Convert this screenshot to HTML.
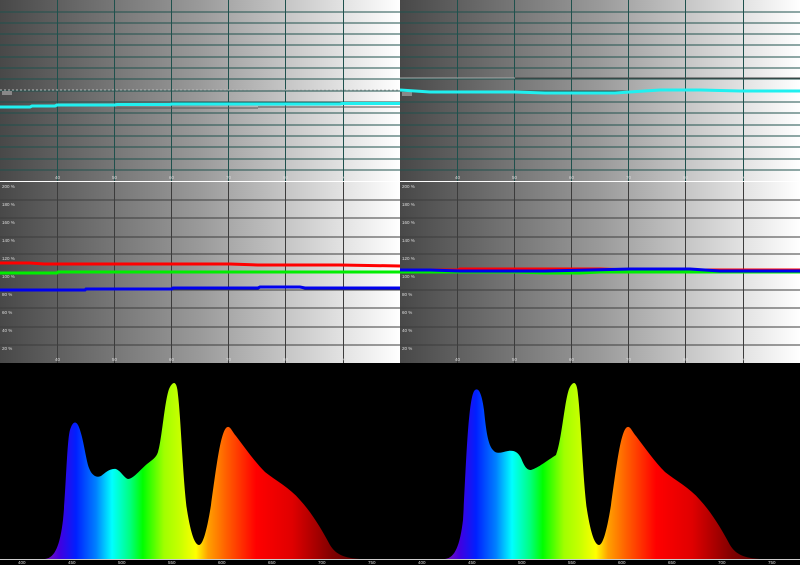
<!DOCTYPE html>
<html><head><meta charset="utf-8"><style>
html,body{margin:0;padding:0;background:#000;width:800px;height:565px;overflow:hidden}
svg{display:block}
text{font-family:"Liberation Sans",sans-serif;font-size:4.5px;fill:#ddd}
</style></head><body>
<svg width="800" height="565" viewBox="0 0 800 565" xmlns="http://www.w3.org/2000/svg">
<defs>
<linearGradient id="g" x1="0" x2="1" y1="0" y2="0">
<stop offset="0" stop-color="#484848"/><stop offset="0.5" stop-color="#9a9a9a"/><stop offset="1" stop-color="#ffffff"/>
</linearGradient>
<linearGradient id="sp" gradientUnits="userSpaceOnUse" x1="0" x2="400" y1="0" y2="0">
<stop offset="0.12" stop-color="#7010c0"/>
<stop offset="0.15" stop-color="#4000e0"/>
<stop offset="0.19" stop-color="#0020ff"/>
<stop offset="0.24" stop-color="#0080ff"/>
<stop offset="0.28" stop-color="#00ffff"/>
<stop offset="0.325" stop-color="#00ff80"/>
<stop offset="0.357" stop-color="#00ff00"/>
<stop offset="0.41" stop-color="#a0ff00"/>
<stop offset="0.45" stop-color="#c8ff00"/>
<stop offset="0.49" stop-color="#ffff00"/>
<stop offset="0.52" stop-color="#ffa000"/>
<stop offset="0.565" stop-color="#ff6000"/>
<stop offset="0.64" stop-color="#ff0000"/>
<stop offset="0.73" stop-color="#e00000"/>
<stop offset="0.83" stop-color="#800000"/>
<stop offset="0.89" stop-color="#600000"/>
</linearGradient>
<g id="topgrid" stroke="#1f514d" stroke-width="1">
<rect x="0" y="0" width="400" height="181" fill="url(#g)" stroke="none"/>
<path d="M0 12H400M0 23H400M0 34H400M0 45H400M0 57H400M0 68H400M0 79H400M0 91H400M0 102H400M0 113H400M0 125H400M0 136H400M0 147H400M0 159H400M0 170H400M57.5 0V181M114.5 0V181M171.5 0V181M228.5 0V181M285.5 0V181M343.5 0V181"/>
<text x="55" y="179" stroke="none">40</text><text x="112" y="179" stroke="none">50</text><text x="169" y="179" stroke="none">60</text><text x="226" y="179" stroke="none">70</text><text x="283" y="179" stroke="none">80</text><text x="341" y="179" stroke="none">90</text>
</g>
<g id="midgrid" stroke="#3c3c3c" stroke-width="1">
<rect x="0" y="0" width="400" height="181" fill="url(#g)" stroke="none"/>
<path d="M0 18H400M0 36H400M0 55H400M0 72H400M0 90H400M0 108H400M0 126H400M0 145H400M0 163H400M57.5 0V181M114.5 0V181M171.5 0V181M228.5 0V181M285.5 0V181M343.5 0V181"/>
<g stroke="none"><text x="2" y="6">200 %</text><text x="2" y="24">180 %</text><text x="2" y="42">160 %</text><text x="2" y="60">140 %</text><text x="2" y="78">120 %</text><text x="2" y="96">100 %</text><text x="2" y="114">80 %</text><text x="2" y="132">60 %</text><text x="2" y="150">40 %</text><text x="2" y="168">20 %</text>
<text x="55" y="179">40</text><text x="112" y="179">50</text><text x="169" y="179">60</text><text x="226" y="179">70</text><text x="283" y="179">80</text><text x="341" y="179">90</text></g>
</g>
<path id="specL" d="M45 559C55 558 60 545 63 520C66 490 67 440 70 430C73 420 77 420 80 430C84 442 86 460 89 468C92 476 97 478 101 476C105 473 110 468 116 469C121 471 124 478 128 479C133 479 140 470 147 464C152 460 156 458 158 452C162 440 165 395 170 387C174 380 177 382 178 395C181 420 183 480 187 510C191 535 195 545 199 545C203 545 207 530 211 505C216 470 220 435 226 428C230 424 232 432 236 436C245 448 255 462 265 472C275 480 290 488 300 500C312 513 322 530 330 545C336 555 345 558 360 559Z"/>
<path id="specR" d="M45 559C55 558 60 545 63 520C66 470 68 395 75 390C79 387 82 395 84 410C86 430 88 445 93 450C97 455 102 452 108 451C114 450 118 452 121 458C124 465 126 470 131 470C138 468 148 460 156 455C162 440 165 395 170 387C174 380 177 382 178 395C181 420 183 480 187 510C191 535 195 545 199 545C203 545 207 530 211 505C216 470 220 435 226 428C230 424 232 432 236 436C245 448 255 462 265 472C275 480 290 488 300 500C312 513 322 530 330 545C336 555 345 558 360 559Z"/>
</defs>
<rect width="800" height="565" fill="#000"/>
<use href="#topgrid" x="0" y="0"/>
<use href="#topgrid" x="400" y="0"/>
<rect x="0" y="181" width="800" height="1" fill="#fff"/>
<use href="#midgrid" x="0" y="182"/>
<use href="#midgrid" x="400" y="182"/>
<rect x="0" y="363" width="800" height="202" fill="#000"/>
<path d="M0 90H400" stroke="#bbb" stroke-width="1" stroke-dasharray="2 2"/>
<rect x="2" y="91" width="10" height="4" fill="#888"/>
<path d="M115 108H258M258 107H400" stroke="#555" stroke-width="1"/>
<path d="M0 107H30L32 106H55L57 105H115L117 104.5H170L172 104H340L342 103.5H400" stroke="#20f0f0" stroke-width="3" fill="none"/>
<path d="M515 78H657M657 78H800" stroke="#444" stroke-width="1"/>
<path d="M400 78H515" stroke="#aaa" stroke-width="1"/>
<rect x="402" y="92" width="10" height="4" fill="#888"/>
<path d="M400 90L430 92H515L545 93H615L660 90H700L740 91H800" stroke="#20f0f0" stroke-width="3" fill="none"/>
<path d="M0 263H30L44 264H230L258 265H340L400 266" stroke="#ff0000" stroke-width="3" fill="none"/>
<path d="M0 273H57L58 272H400" stroke="#00ee00" stroke-width="3" fill="none"/>
<path d="M0 290H85L86 289H172L173 288H258L260 287H300L305 288H400" stroke="#0000ee" stroke-width="3" fill="none"/>
<path d="M400 270H458L460 269H600L630 270H800" stroke="#ff0000" stroke-width="3" fill="none"/>
<path d="M400 272H515L545 273H580L600 272H800" stroke="#00ee00" stroke-width="3" fill="none"/>
<path d="M400 270H430L460 271H545L590 270L630 269H690L720 271H800" stroke="#0000ee" stroke-width="3" fill="none"/>
<use href="#specL" fill="url(#sp)"/>
<g transform="translate(400 0)"><use href="#specR" fill="url(#sp)"/></g>
<rect x="0" y="559" width="800" height="1" fill="#ccc"/>
<g style="font-size:3.5px">
<text x="18" y="564">400</text><text x="68" y="564">450</text><text x="118" y="564">500</text><text x="168" y="564">550</text><text x="218" y="564">600</text><text x="268" y="564">650</text><text x="318" y="564">700</text><text x="368" y="564">750</text>
<text x="418" y="564">400</text><text x="468" y="564">450</text><text x="518" y="564">500</text><text x="568" y="564">550</text><text x="618" y="564">600</text><text x="668" y="564">650</text><text x="718" y="564">700</text><text x="768" y="564">750</text>
</g>
</svg>
</body></html>
